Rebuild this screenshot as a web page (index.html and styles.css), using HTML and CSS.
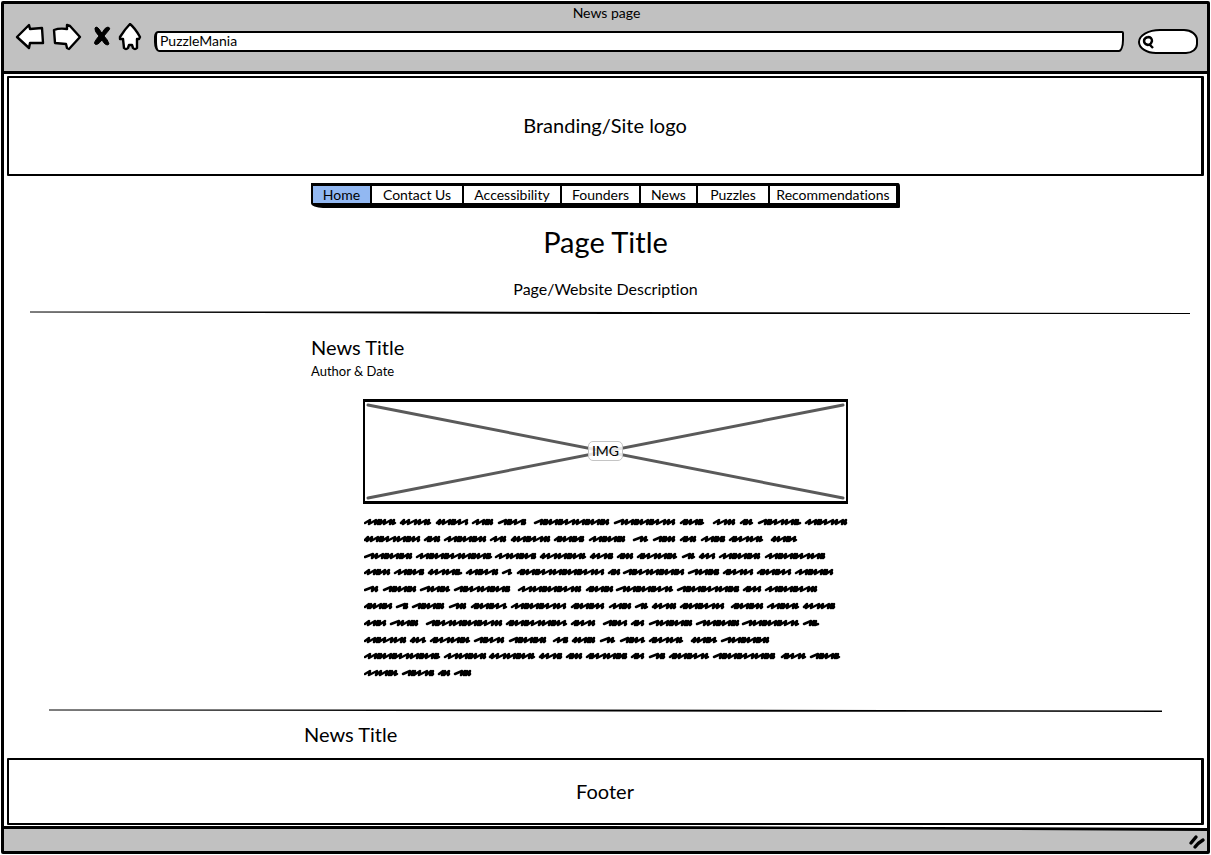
FILE: index.html
```html
<!DOCTYPE html>
<html lang="en">
<head>
<meta charset="utf-8">
<title>News page</title>
<link rel="stylesheet" href="styles.css">
</head>
<body>
<div class="browser">
  <header class="chrome">
    <div class="window-title">News page</div>
    <div class="toolbar">
      <button class="tool back" type="button" aria-label="Back">
        <svg width="30" height="28" viewBox="0 0 30 28"><path d="M2 14 L14 2 L15 6 L27 5 L28 20 L15 20 L14 25 Z"/></svg>
      </button>
      <button class="tool forward" type="button" aria-label="Forward">
        <svg width="30" height="28" viewBox="0 0 30 28"><path d="M2 7 Q7 5 15 6 L15 2 L18 3 L28 14 L17 26 L15 25 L14 21 L3 20 Z"/></svg>
      </button>
      <button class="tool stop" type="button" aria-label="Stop">
        <svg width="18" height="22" viewBox="0 0 18 22"><path class="solid" d="M2 3 Q4 0 8 7 L9 8 Q12 2 15 2 Q18 3 16 5 L11 11 Q15 15 16 19 Q13 22 9 15 Q4 21 2 19 Q0 18 6 11 Q1 6 2 3 Z"/></svg>
      </button>
      <button class="tool home" type="button" aria-label="Home">
        <svg width="24" height="30" viewBox="0 0 24 30"><path d="M12 1 Q17 5 22 14 L21 16 L19 16 L19 25 Q17 27 15 25 L14 22 L11 22 L10 25 Q8 27 6 25 L5 16 L2 16 L2 14 Q7 6 12 1 Z"/></svg>
      </button>
      <input class="address" type="text" value="PuzzleMania" aria-label="Address">
      <label class="search">
        <svg width="12" height="14" viewBox="0 0 12 14" aria-hidden="true"><path d="M6 2 Q10 2 10 6 Q9 10 6 10 Q2 9 2 6 Q2 3 6 2 M7 9 L11 13"/></svg>
        <input type="search" aria-label="Search">
      </label>
    </div>
  </header>

  <main class="page">
    <section class="panel branding">Branding/Site logo</section>
    <nav class="menu" aria-label="Main">
      <a class="active" href="#home">Home</a>
      <a href="#contact">Contact Us</a>
      <a href="#accessibility">Accessibility</a>
      <a href="#founders">Founders</a>
      <a href="#news">News</a>
      <a href="#puzzles">Puzzles</a>
      <a href="#recommendations">Recommendations</a>
    </nav>
    <h1>Page Title</h1>
    <p class="description">Page/Website Description</p>
    <svg class="rule wide" viewBox="0 0 1160 4" preserveAspectRatio="none" aria-hidden="true"><path d="M0 0.5 L400 0.5 L1160 2 L1160 3 L580 3 L0 1.5 Z"/></svg>

    <article class="story">
      <h2>News Title</h2>
      <p class="byline">Author &amp; Date</p>
      <div class="picture">
        <svg viewBox="0 0 480 100" preserveAspectRatio="none" aria-hidden="true"><path d="M3 3 L477 97 M3 97 L477 3"/></svg>
        <span>IMG</span>
      </div>
      <svg class="scribble" viewBox="0 0 484 164" role="img" aria-label="Article text"></svg>
    </article>

    <svg class="rule narrow" viewBox="0 0 1112 4" preserveAspectRatio="none" aria-hidden="true"><path d="M0 0.5 L500 0.5 L1112 1.5 L1112 3 L560 2.5 L0 1.5 Z"/></svg>
    <article class="next-story">
      <h2>News Title</h2>
    </article>
    <footer class="panel footer">Footer</footer>
  </main>

  <div class="status">
    <svg class="edge" viewBox="0 0 1200 6" preserveAspectRatio="none" aria-hidden="true"><path class="paper" d="M0 0 L1200 0 L1200 4 L700 0 Z"/><path d="M0 0 L600 0 L1200 2 L1200 5 L850 3 L0 3 Z"/></svg>
    <svg class="grip" width="18" height="14" viewBox="0 0 18 14" aria-hidden="true"><path d="M4 9 L9 3 M8 13 Q11 9 16 6"/></svg>
  </div>
</div>
<script src="scribble.js"></script>
</body>
</html>
```

FILE: styles.css
```css
* {
  box-sizing: border-box;
}

body {
  margin: 0;
  background: #fff;
  color: #000;
  font-family: Lato, "Open Sans", sans-serif;
  font-size: 14px;
  line-height: 18px;
  font-variant-ligatures: none;
}

h1,
h2,
p {
  margin: 0;
  font-weight: 400;
}

.browser {
  display: flex;
  flex-direction: column;
  min-height: calc(100vh - 2px);
  margin: 1px;
  border: 3px solid #000;
  border-radius: 2px;
}

.chrome {
  padding: 0 9px 17px 11px;
  background: #c1c1c1;
  border-bottom: 3px solid #000;
}

.window-title {
  text-align: center;
}

.toolbar {
  display: flex;
  align-items: flex-start;
  margin-top: 1px;
}

.tool {
  display: block;
  padding: 0;
  border: 0;
  background: none;
}

.tool svg,
.search svg {
  display: block;
  flex: none;
}

.tool path {
  fill: #fff;
  stroke: #000;
  stroke-width: 2.4;
  stroke-linejoin: round;
}

.tool .solid {
  fill: #000;
  stroke-width: 1;
}

.forward {
  margin-left: 7px;
}

.stop {
  margin: 2px 0 0 11px;
}

.home {
  margin-left: 7px;
}

.address {
  flex: 1;
  min-width: 0;
  height: 21px;
  margin: 8px 0 0 12px;
  padding: 0 3px 2px;
  border: 2px solid #000;
  border-left-width: 3px;
  border-radius: 4px 2px 5px 5px / 6px 2px 12px 10px;
  background: #fff;
  color: #000;
  font: inherit;
}

.search {
  display: flex;
  align-items: center;
  width: 60px;
  height: 25px;
  margin: 6px 0 0 14px;
  padding-left: 2px;
  border: 2px solid #000;
  border-radius: 22px 14px 12px 18px / 13px 11px 10px 12px;
  background: #fff;
}

.search path {
  fill: none;
  stroke: #000;
  stroke-width: 2.4;
}

.search input {
  width: 100%;
  min-width: 0;
  padding: 0;
  border: 0;
  background: none;
}

.page {
  display: flex;
  flex: 1;
  flex-direction: column;
  padding: 2px 3px 1px;
}

.panel {
  display: flex;
  align-items: center;
  justify-content: center;
  padding-bottom: 2px;
  border: 2px solid #000;
  border-right-width: 3px;
  border-radius: 1px;
  font-size: 20px;
  line-height: 24px;
}

.branding {
  min-height: 100px;
}

.menu {
  display: grid;
  grid-template-columns: 57px 92px 98px 79px 57px 72px 128px;
  align-self: center;
  margin-top: 7px;
  border: solid #000;
  border-width: 3px 4px 5px 2px;
  border-radius: 0 2px 1px 12px / 0 4px 1px 5px;
  line-height: 17px;
}

.menu a {
  border-left: 2px solid #000;
  color: #000;
  text-align: center;
  text-decoration: none;
}

.menu a.active {
  border-left: 0;
  background: #92b8f2;
}

h1 {
  margin-top: 16px;
  font-size: 29px;
  line-height: 36px;
  text-align: center;
}

.description {
  margin-top: 19px;
  font-size: 16px;
  line-height: 20px;
  text-align: center;
}

.rule {
  display: block;
  height: 4px;
}

.wide {
  margin: 12px 14px 0 23px;
}

.narrow {
  margin: 28px 42px 0;
}

.story {
  width: 589px;
  max-width: 100%;
  margin: 20px auto 0;
}

h2 {
  font-size: 20px;
  line-height: 24px;
}

.byline {
  margin-top: 3px;
  font-size: 13px;
}

.picture {
  display: flex;
  position: relative;
  align-items: center;
  justify-content: center;
  height: 105px;
  margin: 19px 52px 0;
  padding-bottom: 2px;
  border: 2px solid #000;
  border-top-width: 3px;
  border-bottom-width: 3px;
}

.picture svg {
  position: absolute;
  inset: 0;
  width: 100%;
  height: 100%;
}

.picture path {
  fill: none;
  stroke: #5a5a5a;
  stroke-width: 3;
  stroke-linecap: round;
}

.picture span {
  position: relative;
  padding: 0 3px;
  border: 1px solid #c4c4c4;
  border-radius: 5px;
  background: rgba(255, 255, 255, 0.85);
}

.scribble {
  display: block;
  width: 484px;
  height: 164px;
  margin: 13px auto 0 53px;
}

.scribble path {
  fill: none;
  stroke: #000;
  stroke-width: 2.5;
  stroke-linecap: round;
  stroke-linejoin: round;
}

.next-story {
  width: 603px;
  max-width: 100%;
  margin: 9px auto 0;
}

.footer {
  min-height: 67px;
  margin-top: auto;
}

.status {
  display: flex;
  flex-direction: column;
  align-items: flex-end;
  background: #c1c1c1;
}

.edge {
  width: 100%;
  height: 6px;
}

.paper {
  fill: #fff;
}

.grip {
  margin: 2px 2px 3px;
  overflow: visible;
}

.grip path {
  fill: none;
  stroke: #000;
  stroke-width: 3.4;
  stroke-linecap: round;
}
```

FILE: scribble.js
```js
// Start and end of each scribbled word, one array per line of text.
const lines = [
  [0,32, 36,67, 72,104, 108,129, 134,162, 170,245, 250,311, 316,340, 349,371, 376,389, 394,437, 441,483],
  [0,56, 60,76, 80,122, 126,142, 147,186, 190,220, 225,261, 269,284, 289,311, 316,332, 337,361, 365,399, 407,433],
  [0,48, 52,128, 131,172, 176,222, 226,249, 253,269, 273,313, 318,331, 335,351, 355,396, 401,461],
  [0,26, 30,60, 64,98, 102,134, 138,148, 153,240, 244,256, 259,320, 324,355, 359,389, 393,427, 431,469],
  [0,14, 19,52, 56,86, 90,146, 154,217, 222,249, 252,309, 313,375, 379,397, 401,453],
  [0,28, 32,44, 48,80, 85,102, 107,143, 147,202, 207,240, 245,267, 271,284, 288,312, 316,360, 367,399, 403,435, 439,471],
  [0,22, 26,54, 62,138, 142,203, 207,231, 239,263, 267,280, 285,328, 332,375, 378,435, 439,455],
  [0,42, 46,62, 66,106, 110,140, 145,182, 189,204, 208,231, 236,251, 256,281, 285,319, 327,353, 357,405],
  [0,76, 80,122, 125,171, 175,198, 202,218, 222,263, 267,280, 285,301, 305,345, 349,411, 417,442, 446,476],
  [0,34, 38,70, 74,86, 90,107]
];
const steps = [5, 7, 4, 3, 4, 7, 4, 3, 5, 8];
const svg = document.querySelector(".scribble");
let turn = 0;

lines.forEach((words, row) => {
  const y = Math.round(4 + row * 16.8);
  let d = "";
  for (let i = 0; i < words.length; i += 2) {
    const end = words[i + 1] - 1;
    let x = words[i] + 1;
    d += `M${x} ${y + 2}`;
    while (x < end - 2) {
      const step = Math.min(steps[turn++ % steps.length], end - x);
      d += `L${x + step} ${y - 1}L${x + step - 1} ${y + 3}`;
      x += Math.max(step - 1, 3);
    }
    d += `L${end} ${y + 2}`;
  }
  const path = document.createElementNS("http://www.w3.org/2000/svg", "path");
  path.setAttribute("d", d);
  svg.append(path);
});
```
